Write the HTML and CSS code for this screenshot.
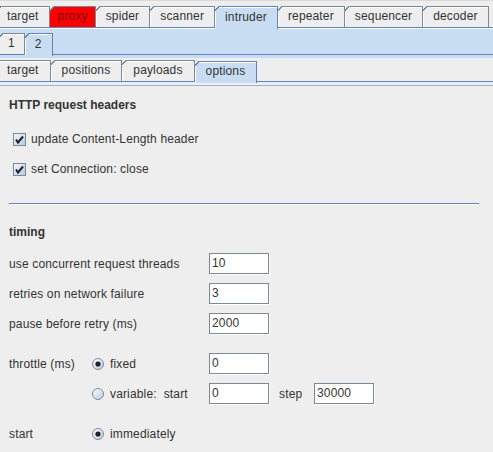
FILE: index.html
```html
<!DOCTYPE html>
<html lang="en">

<head>
    <meta charset="UTF-8">
    <title>intruder options</title>
    <link rel="stylesheet" href="styles.css">
</head>

<body>

    <svg class="defs" width="0" height="0">
        <defs>
            <linearGradient id="boxFill" x1="0" y1="0" x2="1" y2="1">
                <stop offset="0" stop-color="#f6f9fc" />
                <stop offset="1" stop-color="#b3c8df" />
            </linearGradient>
            <linearGradient id="radioFill" x1="0" y1="0" x2="1" y2="1">
                <stop offset="0" stop-color="#ffffff" />
                <stop offset="1" stop-color="#b9cbe0" />
            </linearGradient>
        </defs>
    </svg>

    <div class="tab-row main-tabs">
        <div class="tab">target</div>
        <div class="tab alert">proxy</div>
        <div class="tab">spider</div>
        <div class="tab">scanner</div>
        <div class="tab active">intruder</div>
        <div class="tab">repeater</div>
        <div class="tab">sequencer</div>
        <div class="tab">decoder</div>
    </div>

    <div class="intruder-panel">
        <div class="tab-row sub-tabs">
            <div class="tab">1</div>
            <div class="tab active">2</div>
        </div>
    </div>

    <div class="tab-row section-tabs">
        <div class="tab">target</div>
        <div class="tab">positions</div>
        <div class="tab">payloads</div>
        <div class="tab active">options</div>
    </div>

    <div class="options">
        <h3>HTTP request headers</h3>

        <div class="check-row first">
            <svg class="checkbox" width="13" height="13" viewBox="0 0 13 13">
                <rect x="0.5" y="0.5" width="12" height="12" fill="url(#boxFill)" stroke="#7a8a99" />
                <path d="M3 6.5 L5 9.5 L10 3.5" fill="none" stroke="#222" stroke-width="2" />
            </svg>
            <span>update Content-Length header</span>
        </div>
        <div class="check-row">
            <svg class="checkbox" width="13" height="13" viewBox="0 0 13 13">
                <rect x="0.5" y="0.5" width="12" height="12" fill="url(#boxFill)" stroke="#7a8a99" />
                <path d="M3 6.5 L5 9.5 L10 3.5" fill="none" stroke="#222" stroke-width="2" />
            </svg>
            <span>set Connection: close</span>
        </div>

        <hr class="separator">

        <h3>timing</h3>

        <div class="form-row first">
            <div class="label wide">use concurrent request threads</div>
            <div class="field">10</div>
        </div>
        <div class="form-row">
            <div class="label wide">retries on network failure</div>
            <div class="field">3</div>
        </div>
        <div class="form-row">
            <div class="label wide">pause before retry (ms)</div>
            <div class="field">2000</div>
        </div>

        <div class="form-row spaced">
            <div class="label">throttle (ms)</div>
            <div class="radio-row">
                <svg class="radio" width="12" height="12" viewBox="0 0 12 12">
                    <circle cx="6" cy="6" r="5.5" fill="url(#radioFill)" stroke="#7a8a99" />
                    <circle cx="6" cy="6" r="2.6" fill="#222" />
                </svg>
                <span>fixed</span>
            </div>
            <div class="field">0</div>
        </div>
        <div class="form-row">
            <div></div>
            <div class="radio-row">
                <svg class="radio" width="12" height="12" viewBox="0 0 12 12">
                    <circle cx="6" cy="6" r="5.5" fill="url(#radioFill)" stroke="#7a8a99" />
                </svg>
                <span>variable:&nbsp; start</span>
            </div>
            <div class="field">0</div>
            <div class="label step">step</div>
            <div class="field">30000</div>
        </div>

        <div class="form-row spaced">
            <div class="label">start</div>
            <div class="radio-row">
                <svg class="radio" width="12" height="12" viewBox="0 0 12 12">
                    <circle cx="6" cy="6" r="5.5" fill="url(#radioFill)" stroke="#7a8a99" />
                    <circle cx="6" cy="6" r="2.6" fill="#222" />
                </svg>
                <span>immediately</span>
            </div>
        </div>
    </div>

</body>

</html>
```

FILE: styles.css
```css
body {
    margin: 0;
    padding: 0;
    height: 452px;
    overflow: hidden;
    font-family: "Liberation Sans", Arial, sans-serif;
    font-size: 12px;
    letter-spacing: 0.15px;
    color: #333;
    background-color: #eeeeee;
    border-top: 1px solid #d9d9d9;
}

.defs {
    position: absolute;
}

/* tabs */

.tab-row {
    display: flex;
    align-items: flex-end;
    border-bottom: 1px solid #6382bf;
    --outside: #eeeeee;
}

.tab {
    position: relative;
    height: 20px;
    line-height: 18px;
    padding: 0 10px;
    background-color: #eeeeee;
    border-top: 1px solid #7a8a99;
    border-right: 1px solid #7a8a99;
    box-shadow: inset 1px 1px 0 #fff;
    white-space: nowrap;
}

.tab::before {
    content: "";
    position: absolute;
    left: 0;
    top: -1px;
    width: 6px;
    height: 6px;
    background: linear-gradient(135deg, var(--outside) 0 2.6px, #7a8a99 2.6px 3.6px, transparent 3.6px);
}

.tab.active {
    height: 21px;
    padding-top: 1px;
    margin-bottom: -2px;
    z-index: 1;
    background-color: #c8ddf2;
    border-color: #6382bf;
}

.tab.active::before {
    background: linear-gradient(135deg, var(--outside) 0 2.6px, #6382bf 2.6px 3.6px, transparent 3.6px);
}

.tab.alert {
    padding: 0 8px 0 9px;
    background-color: #ff0000;
    color: #7a0000;
    box-shadow: none;
}

.main-tabs {
    height: 22px;
    margin-top: 4px;
    margin-left: -3px;
}

.main-tabs .tab.alert {
    padding: 0 7px 0 8px;
}

.intruder-panel {
    background-color: #c8ddf2;
    box-shadow: inset 0 1px 0 #fff;
    padding-bottom: 3px;
}

.sub-tabs {
    height: 26px;
    margin-left: -1px;
    --outside: #c8ddf2;
}

.sub-tabs .tab {
    padding: 0 9px;
}

.sub-tabs .tab.active {
    padding: 1px 10px 0;
}

.section-tabs {
    height: 23px;
    margin-left: -4px;
}

.section-tabs .tab {
    padding: 0 11px;
}

/* options panel */

.options {
    margin-top: 3px;
    border-top: 1px solid #9fb3d6;
    padding: 0 9px;
}

h3 {
    margin: 12px 0 0;
    font-size: 12px;
    line-height: 14px;
    font-weight: bold;
    letter-spacing: 0;
}

.check-row {
    display: flex;
    align-items: center;
    height: 14px;
    margin-top: 16px;
    padding-left: 4px;
}

.check-row.first {
    margin-top: 20px;
}

.checkbox {
    flex-shrink: 0;
    margin-right: 5px;
}

.separator {
    margin: 27px 5px 0 0;
    border: 0;
    border-top: 1px solid #6382bf;
    border-bottom: 1px solid #fff;
}

.separator + h3 {
    margin-top: 20px;
}

.form-row {
    display: grid;
    grid-template-columns: 83px 117px 60px 45px 60px;
    align-items: center;
    height: 21px;
    margin-top: 9px;
}

.form-row.first {
    margin-top: 14px;
}

.form-row.spaced {
    margin-top: 19px;
}

.label.wide {
    grid-column: 1 / 3;
}

.label.step {
    padding-left: 10px;
}

.radio-row {
    display: flex;
    align-items: center;
    white-space: nowrap;
}

.radio {
    flex-shrink: 0;
    margin-right: 6px;
}

.field {
    box-sizing: border-box;
    height: 21px;
    line-height: 19px;
    padding-left: 2px;
    background-color: #fff;
    border: 1px solid #7a8a99;
    box-shadow: 1px 1px 0 #fff;
}
```
